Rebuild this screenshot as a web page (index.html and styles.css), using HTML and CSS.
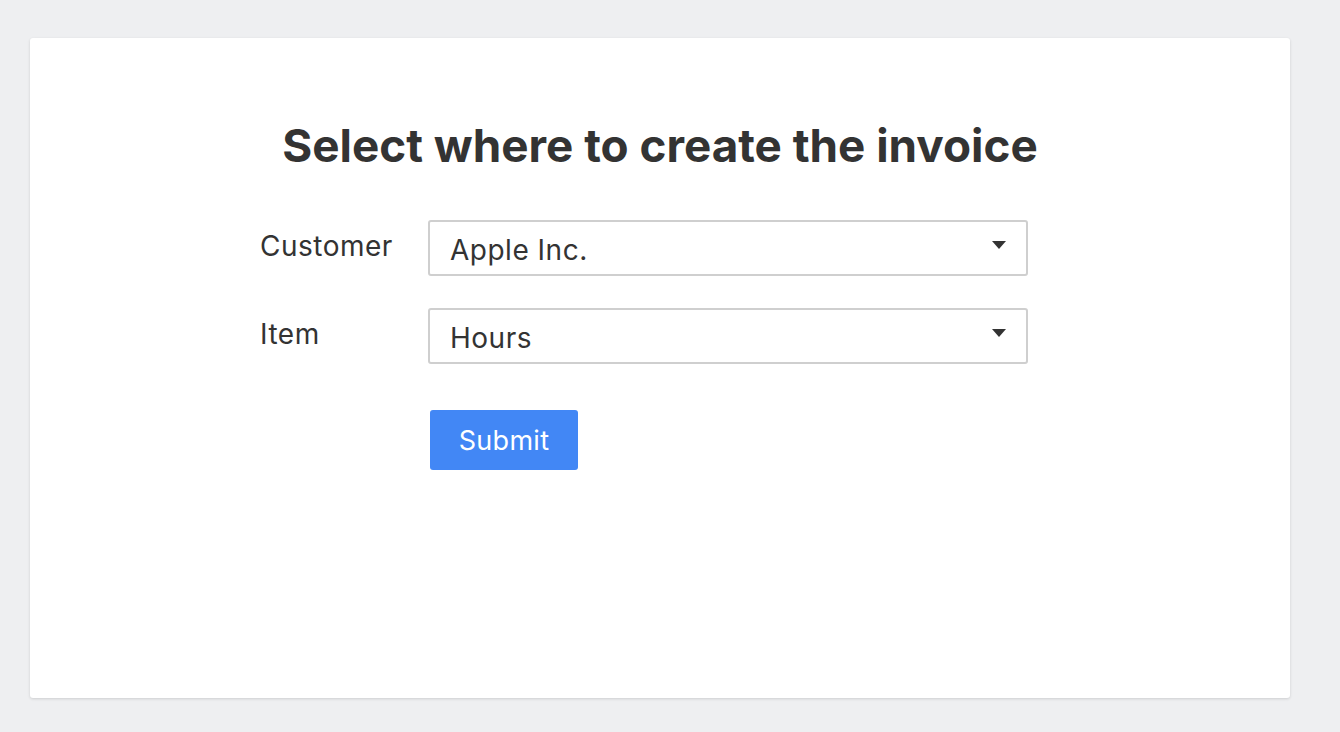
FILE: index.html
```html
<!DOCTYPE html>
<html lang="en">
<head>
<meta charset="utf-8">
<title>Select where to create the invoice</title>
<link rel="stylesheet" href="styles.css">
</head>
<body>
<div class="card">
  <h1 class="title">Select where to create the invoice</h1>
  <form class="form">
    <div class="row">
      <label class="label" for="customer">Customer</label>
      <div class="select-wrap">
        <select id="customer" class="select">
          <option>Apple Inc.</option>
        </select>
        <svg class="arrow" width="14" height="8" viewBox="0 0 14 8"><path d="M0 0H14L7 8Z" fill="#333"/></svg>
      </div>
    </div>
    <div class="row">
      <label class="label" for="item">Item</label>
      <div class="select-wrap">
        <select id="item" class="select">
          <option>Hours</option>
        </select>
        <svg class="arrow" width="14" height="8" viewBox="0 0 14 8"><path d="M0 0H14L7 8Z" fill="#333"/></svg>
      </div>
    </div>
    <div class="row actions">
      <div class="label"></div>
      <button type="button" class="button">Submit</button>
    </div>
  </form>
</div>
</body>
</html>
```

FILE: styles.css
```css
html, body {
  margin: 0;
  padding: 0;
}
body {
  background: #eeeff1;
  font-family: Inter, "Noto Sans", "Liberation Sans", sans-serif;
  color: #333;
  padding: 38px 0 0 30px;
  height: 732px;
  box-sizing: border-box;
}
.card {
  width: 1260px;
  height: 660px;
  background: #fff;
  border-radius: 3px;
  box-shadow: 0 1px 3px rgba(0, 0, 0, 0.14);
  box-sizing: border-box;
  padding-top: 80px;
}
.title {
  margin: 0;
  text-align: center;
  font-size: 45.8px;
  font-weight: 700;
  line-height: 56px;
  color: #333;
}
.form {
  width: 800px;
  margin: 46px auto 0;
  display: flex;
  flex-direction: column;
  gap: 32px;
}
.row {
  display: flex;
  align-items: flex-start;
}
.label {
  width: 168px;
  flex: none;
  font-size: 28px;
  letter-spacing: 0.5px;
  line-height: 34px;
  padding-top: 9px;
}
.actions .label {
  padding-top: 0;
}
.select-wrap {
  position: relative;
  width: 600px;
}
.select {
  appearance: none;
  -webkit-appearance: none;
  width: 100%;
  height: 56px;
  box-sizing: border-box;
  border: 2px solid #cfcfcf;
  border-radius: 3px;
  background: #fff;
  font-family: inherit;
  font-size: 28px;
  letter-spacing: 0.5px;
  color: #333;
  padding: 3px 40px 0 20px;
  margin: 0;
  outline: none;
}
.arrow {
  position: absolute;
  right: 22px;
  top: 21px;
  pointer-events: none;
}
.actions {
  margin-top: 14px;
}
.button {
  margin-left: 2px;
  width: 148px;
  height: 60px;
  border: none;
  border-radius: 3px;
  background: #4287f5;
  color: #fff;
  font-family: inherit;
  font-size: 27px;
  letter-spacing: 0.3px;
  padding: 0;
  cursor: pointer;
}
```
